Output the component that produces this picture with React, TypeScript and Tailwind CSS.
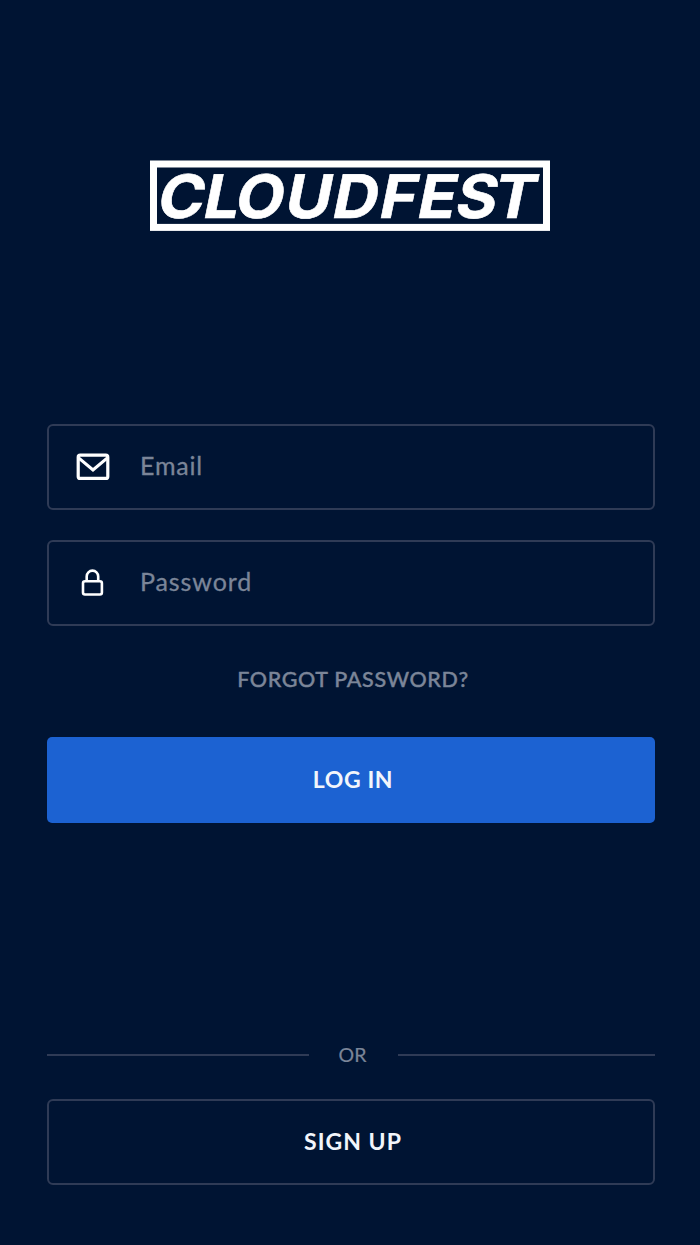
import React from 'react';

const MailIcon: React.FC = () => (
  <svg className="w-[34px] h-7" viewBox="0 0 34 28" fill="none" stroke="#fff" strokeWidth="3.2">
    <rect x="2.2" y="2.2" width="29.6" height="23.2" rx="2" />
    <path d="M2.6 4.9 17 17 31.4 4.9" />
  </svg>
);

const LockIcon: React.FC = () => (
  <svg className="w-[34px] h-7" viewBox="0 0 34 28" fill="none" stroke="#fff" strokeWidth="2.6">
    <rect x="7" y="12.2" width="18.9" height="13.3" rx="2" />
    <path d="M10.7 12.2V7.4a5.75 5.75 0 0 1 11.5 0v4.8" />
  </svg>
);

interface FieldProps {
  icon: React.ReactNode;
  label: string;
  labelClass: string;
}

const Field: React.FC<FieldProps> = ({ icon, label, labelClass }) => (
  <label className="flex items-center h-[86px] pl-[27px] border-2 border-[#2f3b56] rounded-md">
    {icon}
    <span className={`ml-[30px] pb-0.5 text-[25px] text-[#7b8598] [-webkit-text-stroke:0.3px] ${labelClass}`}>{label}</span>
  </label>
);

const App: React.FC = () => {
  return (
    <div className="flex flex-col w-[700px] h-[1245px] pl-[47px] pr-[45px] bg-[#001433] font-['Lato',sans-serif]">
      {/* Logo */}
      <svg className="mt-40 ml-[103px] w-[400px] h-[71px] shrink-0 overflow-visible" viewBox="0 0 400 71">
        <rect x="3.5" y="4" width="393" height="63.4" fill="none" stroke="#fff" strokeWidth="7" />
        <text
          className="font-['Inter',sans-serif]"
          transform="translate(0 58) skewX(-11.5) scale(1.05 1)"
          x="4.8 48.6 78.8 126.2 171.4 216.2 252.4 288.5 324.6"
          fill="#fff"
          stroke="#fff"
          strokeWidth="0.6"
          fontSize="60"
          fontWeight="700"
        >
          CLOUDFEST
        </text>
      </svg>

      <form className="flex flex-col mt-[192.5px]">
        <div className="flex flex-col gap-[30px]">
          <Field icon={<MailIcon />} label="Email" labelClass="tracking-[0.8px]" />
          <Field icon={<LockIcon />} label="Password" labelClass="tracking-[0.9px]" />
        </div>

        <a className="mt-[37.5px] h-8 pl-1 leading-8 text-center text-[21.5px] font-medium tracking-[0.65px] text-[#7b8598] [-webkit-text-stroke:0.4px]">
          FORGOT PASSWORD?
        </a>

        <button type="button" className="mt-[42px] h-[86px] pl-1 pb-px rounded-[5px] bg-[#1c62d2] text-[23px] font-bold tracking-[0.6px] text-[#f2f5fb]">
          LOG IN
        </button>
      </form>

      {/* Divider */}
      <div className="flex items-center mt-[217px] h-[30px]">
        <div className="w-[262px] h-0.5 bg-[#2f3b56]" />
        <span className="w-[89px] pr-0.5 text-center text-[19.5px] text-[#7b8598] [-webkit-text-stroke:0.2px]">OR</span>
        <div className="flex-1 h-0.5 bg-[#2f3b56]" />
      </div>

      <button type="button" className="mt-[29px] h-[86px] pl-1 pb-px border-2 border-[#2f3b56] rounded-md text-[23px] font-bold tracking-[1px] text-[#f2f5fb]">
        SIGN UP
      </button>
    </div>
  );
};

export default App;
